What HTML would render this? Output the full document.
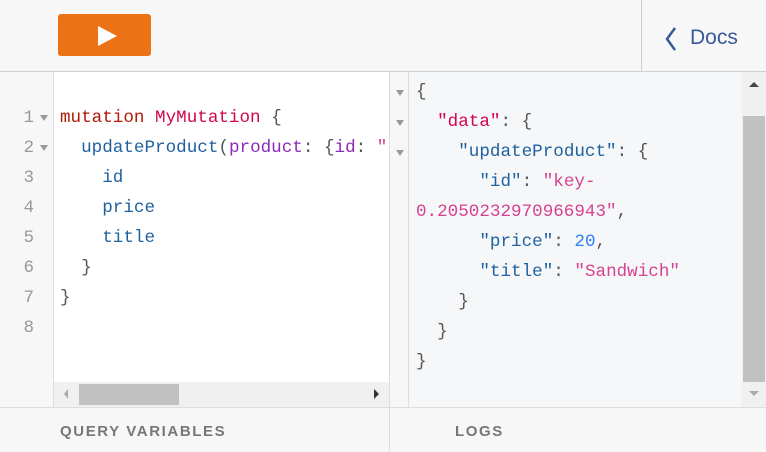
<!DOCTYPE html><html><head><style>
body{margin:0;width:766px;height:451px;overflow:hidden;background:#f7f7f7;font-family:"Liberation Sans",sans-serif;position:relative}
.a{position:absolute}
.m{font-family:"Liberation Mono",monospace;font-size:17.6px;line-height:30px;white-space:pre;position:absolute}
.ln{color:#999;text-align:right;width:34px;left:0}
.kw{color:#b11a04}.def{color:#d2054e}.prop{color:#1f61a0}.attr{color:#8b2bb9}.p{color:#555}.str{color:#d64292}.num{color:#2882f9}
.ar{position:absolute;width:0;height:0;border-left:4px solid transparent;border-right:4px solid transparent;border-top:6px solid #999}
</style></head><body>
<div class="a" style="left:0;top:0;width:766px;height:71px;background:#f7f7f7;border-bottom:1px solid #d0d0d0"></div>
<div class="a" style="left:58px;top:14px;width:93px;height:42px;background:#ec7216;border-radius:3px"></div>
<div class="a" style="left:98px;top:26px;width:0;height:0;border-top:10px solid transparent;border-bottom:10px solid transparent;border-left:19px solid #fff"></div>
<div class="a" style="left:641px;top:0;width:1px;height:71px;background:#d0d0d0"></div>
<svg class="a" style="left:664px;top:26px" width="14" height="26"><path d="M11 2L3 13L11 24" stroke="#3b5998" stroke-width="2.5" fill="none"/></svg>
<div class="a" style="left:690px;top:26px;font-size:21px;color:#3b5998">Docs</div>

<div class="a" style="left:0;top:72px;width:53px;height:335px;background:#f7f7f7;border-right:1px solid #ddd"></div>
<div class="a" style="left:54px;top:72px;width:335px;height:310px;background:#fff"></div>
<div class="a" style="left:54px;top:382px;width:335px;height:25px;background:#f0f0f0"></div>
<div class="a" style="left:79px;top:384px;width:100px;height:21px;background:#c1c1c1"></div>
<div class="a" style="left:64px;top:389px;width:0;height:0;border-top:5px solid transparent;border-bottom:5px solid transparent;border-right:4px solid #aaa"></div>
<div class="a" style="left:374px;top:389px;width:0;height:0;border-top:5px solid transparent;border-bottom:5px solid transparent;border-left:5px solid #333"></div>

<div class="m ln" style="top:103px">1</div><div class="ar" style="left:40px;top:115px"></div>
<div class="m ln" style="top:133px">2</div><div class="ar" style="left:40px;top:145px"></div>
<div class="m ln" style="top:163px">3</div>
<div class="m ln" style="top:193px">4</div>
<div class="m ln" style="top:223px">5</div>
<div class="m ln" style="top:253px">6</div>
<div class="m ln" style="top:283px">7</div>
<div class="m ln" style="top:313px">8</div>
<div class="a" style="left:60px;top:73px;width:329px;height:309px;overflow:hidden">
<div class="m" style="left:0;top:30px"><span class="kw">mutation</span> <span class="def">MyMutation</span> <span class="p">{</span></div>
<div class="m" style="left:0;top:60px">  <span class="prop">updateProduct</span><span class="p">(</span><span class="attr">product</span><span class="p">: {</span><span class="attr">id</span><span class="p">: </span><span class="str">"</span></div>
<div class="m prop" style="left:0;top:90px">    id</div>
<div class="m prop" style="left:0;top:120px">    price</div>
<div class="m prop" style="left:0;top:150px">    title</div>
<div class="m p" style="left:0;top:180px">  }</div>
<div class="m p" style="left:0;top:210px">}</div>
</div>

<div class="a" style="left:389px;top:72px;width:1px;height:335px;background:#ddd"></div>
<div class="a" style="left:390px;top:72px;width:18px;height:335px;background:#f7f7f7;border-right:1px solid #ddd"></div>
<div class="ar" style="left:396px;top:90px"></div>
<div class="ar" style="left:396px;top:120px"></div>
<div class="ar" style="left:396px;top:150px"></div>
<div class="a" style="left:409px;top:72px;width:333px;height:335px;background:#f6f7f8"></div>
<div class="a" style="left:742px;top:72px;width:24px;height:335px;background:#f0f0f0"></div>
<div class="a" style="left:743px;top:116px;width:22px;height:266px;background:#c1c1c1"></div>
<div class="a" style="left:749px;top:82px;width:0;height:0;border-left:5px solid transparent;border-right:5px solid transparent;border-bottom:5px solid #444"></div>
<div class="a" style="left:749px;top:391px;width:0;height:0;border-left:5px solid transparent;border-right:5px solid transparent;border-top:5px solid #aaa"></div>

<div class="m p" style="left:416px;top:77px">{</div>
<div class="m" style="left:416px;top:107px">  <span class="def">"data"</span><span class="p">: {</span></div>
<div class="m" style="left:416px;top:137px">    <span class="prop">"updateProduct"</span><span class="p">: {</span></div>
<div class="m" style="left:416px;top:167px">      <span class="prop">"id"</span><span class="p">: </span><span class="str">"key-</span></div>
<div class="m" style="left:416px;top:197px"><span class="str">0.2050232970966943"</span><span class="p">,</span></div>
<div class="m" style="left:416px;top:227px">      <span class="prop">"price"</span><span class="p">: </span><span class="num">20</span><span class="p">,</span></div>
<div class="m" style="left:416px;top:257px">      <span class="prop">"title"</span><span class="p">: </span><span class="str">"Sandwich"</span></div>
<div class="m p" style="left:416px;top:287px">    }</div>
<div class="m p" style="left:416px;top:317px">  }</div>
<div class="m p" style="left:416px;top:347px">}</div>

<div class="a" style="left:0;top:407px;width:766px;height:44px;background:#f7f7f7;border-top:1px solid #ddd"></div>
<div class="a" style="left:389px;top:408px;width:1px;height:43px;background:#ddd"></div>
<div class="a" style="left:60px;top:423px;font-size:15px;font-weight:bold;letter-spacing:1.6px;color:#777">QUERY VARIABLES</div>
<div class="a" style="left:455px;top:423px;font-size:15px;font-weight:bold;letter-spacing:1.6px;color:#777">LOGS</div>
</body></html>
